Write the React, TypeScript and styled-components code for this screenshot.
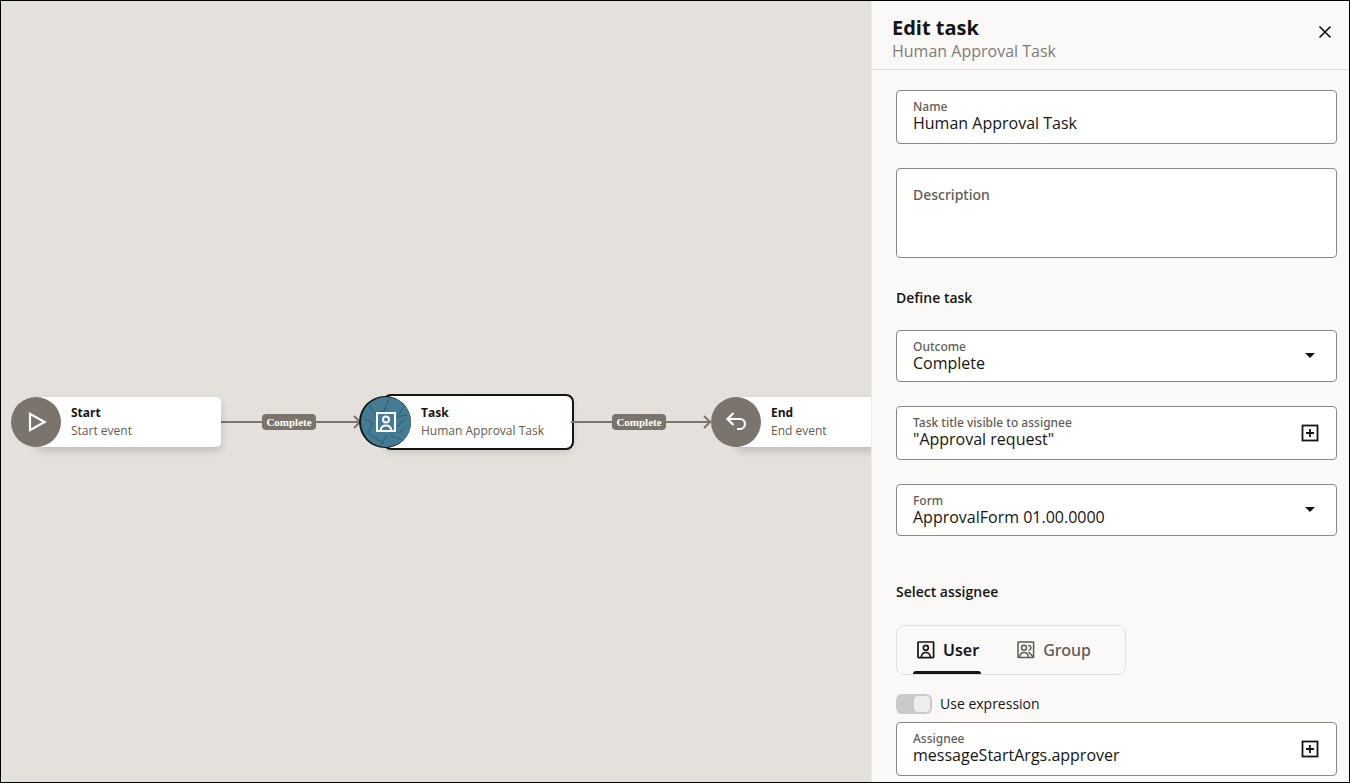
import React, { useId, useState } from "react";
import styled, { createGlobalStyle } from "styled-components";

const ink = "#161513";
const muted = "#5f5b57";
const stone = "#7a746d";
const mediumFont = `"Noto Sans", "Open Sans", sans-serif`;

const GlobalStyle = createGlobalStyle`
  *, *::before, *::after { box-sizing: border-box; }
  body { margin: 0; }
  body, button, input, select, textarea {
    font-family: "Open Sans", "Noto Sans", sans-serif;
    color: ${ink};
  }
`;

const Shell = styled.div`
  display: grid;
  grid-template-columns: minmax(0, 1fr) 478px;
  height: 100vh;
  border: 1px solid #000;
  overflow: hidden;
`;

const Canvas = styled.main`
  position: relative;
  overflow: hidden;
  background: #e4e1dc;
`;

/* Flow nodes and connectors have free positions on the canvas. */
const NodeBox = styled.div<{ $x: number; $y: number }>`
  position: absolute;
  left: ${(p) => p.$x}px;
  top: ${(p) => p.$y}px;
  display: flex;
  align-items: center;
  width: 210px;
  height: 50px;
`;

const NodeCard = styled.div<{ $selected?: boolean }>`
  flex: 1;
  align-self: stretch;
  display: flex;
  flex-direction: column;
  justify-content: center;
  margin-left: -25px;
  padding-left: 35px;
  background: #fff;
  border-radius: 5px;
  outline: ${(p) => (p.$selected ? `2px solid ${ink}` : "none")};
  outline-offset: 1px;
  box-shadow: ${(p) => (p.$selected ? "0 0 0 1px #fff, " : "")}0 4px 8px rgba(0, 0, 0, 0.16);
`;

const NodeIcon = styled.div<{ $selected?: boolean }>`
  position: relative;
  z-index: 1;
  width: 50px;
  height: 50px;
  border-radius: 50%;
  overflow: hidden;
  background: ${(p) => (p.$selected ? "#437c94" : stone)};
  box-shadow: ${(p) => (p.$selected ? `-1px 0 0 1px ${ink}` : "none")};

  svg { display: block; }
`;

const NodeTitle = styled.strong`
  font-size: 12px;
  line-height: 18px;
  font-weight: 700;
`;

const NodeSubtitle = styled.span`
  font-size: 12px;
  line-height: 18px;
  color: ${muted};
  white-space: nowrap;
`;

const EdgeBox = styled.div<{ $x: number; $y: number }>`
  position: absolute;
  left: ${(p) => p.$x}px;
  top: ${(p) => p.$y}px;
  display: grid;
  width: 142px;
  height: 16px;
  align-items: center;

  > * { grid-area: 1 / 1; }
`;

const EdgeLabel = styled.span`
  justify-self: center;
  margin-right: 6px;
  padding: 0 4px;
  border-radius: 4px;
  background: ${stone};
  color: #fff;
  font: 700 11px/16px "Liberation Serif", serif;
`;

const Panel = styled.aside`
  display: flex;
  flex-direction: column;
  min-height: 0;
  border-left: 1px solid #efedea;
  background: #fbf9f8;
`;

const PanelHeader = styled.header`
  display: flex;
  justify-content: space-between;
  align-items: flex-start;
  padding: 15px 12px 7px 20px;
  border-bottom: 1px solid #dddbd9;
`;

const PanelTitle = styled.h1`
  margin: 0;
  font-size: 20px;
  line-height: 24px;
  font-weight: 700;
`;

const PanelSubtitle = styled.p`
  margin: 0;
  font-size: 16px;
  line-height: 22px;
  color: #7f7c78;
`;

const IconButton = styled.button`
  display: grid;
  place-items: center;
  flex: none;
  width: 24px;
  height: 24px;
  padding: 0;
  border: 0;
  background: none;
  cursor: pointer;
`;

const CloseButton = styled(IconButton)`
  margin-top: 4px;
`;

const Form = styled.form`
  display: flex;
  flex-direction: column;
  min-height: 0;
  overflow: hidden;
  padding: 20px 12px 0 24px;
`;

const Fields = styled.div`
  display: flex;
  flex-direction: column;
  gap: 24px;
`;

const SectionTitle = styled.h2<{ $above: number; $below: number }>`
  margin: ${(p) => p.$above}px 0 ${(p) => p.$below}px;
  font-size: 14px;
  line-height: 24px;
  font-weight: 600;
`;

const FieldBox = styled.div<{ $compact?: boolean }>`
  display: flex;
  align-items: center;
  flex: none;
  height: ${(p) => (p.$compact ? 52 : 54)}px;
  padding: 0 14px 0 16px;
  border: 1px solid #8b8885;
  border-radius: 4px;
  background: #fff;
`;

const FieldText = styled.div`
  flex: 1;
  align-self: flex-start;
  display: flex;
  flex-direction: column;
  min-width: 0;
  padding-top: 9px;
`;

const FieldLabel = styled.label`
  font-family: ${mediumFont};
  font-size: 12px;
  line-height: 14px;
  font-weight: 500;
  color: ${muted};
`;

const TextInput = styled.input`
  width: 100%;
  height: 22px;
  margin: -2px 0 0;
  padding: 0;
  border: 0;
  outline: 0;
  background: none;
  font-size: 16px;
  line-height: 22px;
`;

const SelectInput = styled.select`
  width: 100%;
  height: 22px;
  margin: -2px 0 0;
  padding: 0;
  border: 0;
  outline: 0;
  appearance: none;
  background: none;
  font-size: 16px;
  line-height: 22px;
`;

const CaretSlot = styled.span`
  display: grid;
  place-items: center;
  width: 24px;
  height: 24px;
`;

const AreaBox = styled.div`
  display: flex;
  flex-direction: column;
  height: 90px;
  padding: 16px;
  border: 1px solid #8b8885;
  border-radius: 4px;
  background: #fff;
`;

const AreaLabel = styled.label`
  font-family: ${mediumFont};
  font-size: 14px;
  line-height: 20px;
  font-weight: 500;
  color: ${muted};
`;

const Area = styled.textarea`
  flex: 1;
  min-height: 0;
  padding: 0;
  border: 0;
  outline: 0;
  resize: none;
  background: none;
  font-size: 16px;
  line-height: 20px;
`;

const Tabs = styled.div`
  display: flex;
  align-self: flex-start;
  gap: 32px;
  height: 50px;
  padding: 0 32px 0 16px;
  border: 1px solid #e1dfdd;
  border-radius: 8px;
`;

const Tab = styled.button<{ $active: boolean }>`
  position: relative;
  display: flex;
  align-items: center;
  gap: 8px;
  padding: 0 2px 0 4px;
  border: 0;
  background: none;
  font-family: ${mediumFont};
  font-size: 16px;
  line-height: 20px;
  font-weight: ${(p) => (p.$active ? 600 : 500)};
  color: ${(p) => (p.$active ? ink : muted)};
  cursor: pointer;

  &::after {
    content: "";
    position: absolute;
    inset: auto 0 0;
    height: ${(p) => (p.$active ? 3 : 0)}px;
    border-radius: 3px 3px 0 0;
    background: ${ink};
  }
`;

const SwitchRow = styled.div`
  display: flex;
  align-items: center;
  gap: 8px;
  padding: 17px 0 6px;
`;

const Switch = styled.input`
  display: flex;
  align-items: center;
  width: 36px;
  height: 20px;
  margin: 0;
  padding: 0 2px;
  appearance: none;
  border-radius: 6px;
  background: #cbc9c9;

  &::before {
    content: "";
    width: 16px;
    height: 16px;
    border-radius: 4px;
    background: #efeeec;
  }

  &:checked::before { margin-left: auto; }
`;

const SwitchLabel = styled.label`
  font-size: 14px;
  line-height: 24px;
`;

const PlayGlyph = () => (
  <svg width="50" height="50" viewBox="0 0 50 50" aria-hidden="true">
    <path d="M19 16.8v16.4L33.6 25z" fill="none" stroke="#fff" strokeWidth="2.2" />
  </svg>
);

const ReturnGlyph = () => (
  <svg width="50" height="50" viewBox="0 0 50 50" aria-hidden="true">
    <path
      d="M22.5 16 16.500 22l6 6M16.500 22H29a5 5 0 0 1 0 10H26"
      fill="none"
      stroke="#fff"
      strokeWidth="2.2"
    />
  </svg>
);

const PersonGlyph = () => (
  <svg width="50" height="50" viewBox="0 0 50 50" aria-hidden="true">
    <path
      d="M28 2l-5 12M8 8l6 9M14 17l12-5M3 22l9 4M12 26l-5 10M7 36l6 4M13 40l10 7M26 38l-6 9M30 38l11 5M36 30l8-8M44 8l-8 12M36 20l10-2M38 36l6-6"
      fill="none"
      stroke="#346579"
      strokeWidth="1.300"
    />
    <rect x="16" y="16" width="18" height="18" fill="none" stroke="#fff" strokeWidth="2" />
    <circle cx="25" cy="22.500" r="3" fill="none" stroke="#fff" strokeWidth="2" />
    <path d="M19.500 33.500c.5-3 2.500-5 5.500-5s5 2 5.500 5" fill="none" stroke="#fff" strokeWidth="2" />
  </svg>
);

const UserIcon = () => (
  <svg width="18" height="18" viewBox="0 0 18 18" fill="none" stroke="currentColor" strokeWidth="1.700" aria-hidden="true">
    <rect x="1" y="1" width="15.600" height="15.600" rx=".6" />
    <circle cx="8.800" cy="6.800" r="2.500" />
    <path d="M4.200 16.300c.3-3 2-4.800 4.600-4.800s4.300 1.800 4.600 4.800" />
  </svg>
);

const GroupIcon = () => (
  <svg width="18" height="18" viewBox="0 0 18 18" fill="none" stroke="currentColor" strokeWidth="1.500" aria-hidden="true">
    <rect x="1" y="1" width="15.600" height="15.600" rx=".6" />
    <circle cx="7" cy="6.800" r="2.500" />
    <path d="M2.600 16.300c.3-3 1.800-4.800 4.400-4.800s4.100 1.800 4.400 4.800M11.200 4.700a2.200 2.200 0 1 1 .3 4.300M11.500 11l4.600 4.800" />
  </svg>
);

const PlusBoxIcon = () => (
  <svg width="18" height="18" viewBox="0 0 18 18" fill="none" stroke={ink} strokeWidth="1.800" aria-hidden="true">
    <rect x="1.500" y="1.500" width="15" height="15" />
    <path d="M9 5v8M5 9h8" />
  </svg>
);

const Caret = () => (
  <CaretSlot>
    <svg width="10" height="6" viewBox="0 0 10 6" aria-hidden="true">
      <path d="M0 0h10L5 5z" fill={ink} />
    </svg>
  </CaretSlot>
);

type NodeProps = {
  x: number;
  y: number;
  title: string;
  subtitle: string;
  selected?: boolean;
  children: React.ReactNode;
};

const FlowNode = ({ x, y, title, subtitle, selected, children }: NodeProps) => (
  <NodeBox $x={x} $y={y}>
    <NodeIcon $selected={selected}>{children}</NodeIcon>
    <NodeCard $selected={selected}>
      <NodeTitle>{title}</NodeTitle>
      <NodeSubtitle>{subtitle}</NodeSubtitle>
    </NodeCard>
  </NodeBox>
);

const Edge = ({ x, y, label }: { x: number; y: number; label: string }) => (
  <EdgeBox $x={x} $y={y}>
    <svg width="142" height="16" viewBox="0 0 142 16" aria-hidden="true">
      <path d="M0 8h140M133 2l6 6-6 6" fill="none" stroke={stone} strokeWidth="2" />
    </svg>
    <EdgeLabel>{label}</EdgeLabel>
  </EdgeBox>
);

type FieldProps = { label: string; initial: string; expandable?: boolean };

const TextField = ({ label, initial, expandable }: FieldProps) => {
  const id = useId();
  return (
    <FieldBox>
      <FieldText>
        <FieldLabel htmlFor={id}>{label}</FieldLabel>
        <TextInput id={id} defaultValue={initial} />
      </FieldText>
      {expandable && (
        <IconButton type="button" aria-label={`Edit ${label}`}>
          <PlusBoxIcon />
        </IconButton>
      )}
    </FieldBox>
  );
};

const SelectField = ({ label, initial }: FieldProps) => {
  const id = useId();
  return (
    <FieldBox $compact>
      <FieldText>
        <FieldLabel htmlFor={id}>{label}</FieldLabel>
        <SelectInput id={id} defaultValue={initial}>
          <option>{initial}</option>
        </SelectInput>
      </FieldText>
      <Caret />
    </FieldBox>
  );
};

export default function App() {
  const [tab, setTab] = useState<"user" | "group">("user");

  return (
    <>
      <GlobalStyle />
      <Shell>
        <Canvas>
          <Edge x={220} y={413} label="Complete" />
          <FlowNode x={10} y={396} title="Start" subtitle="Start event">
            <PlayGlyph />
          </FlowNode>
          <FlowNode x={360} y={396} title="Task" subtitle="Human Approval Task" selected>
            <PersonGlyph />
          </FlowNode>
          <Edge x={570} y={413} label="Complete" />
          <FlowNode x={710} y={396} title="End" subtitle="End event">
            <ReturnGlyph />
          </FlowNode>
        </Canvas>

        <Panel>
          <PanelHeader>
            <div>
              <PanelTitle>Edit task</PanelTitle>
              <PanelSubtitle>Human Approval Task</PanelSubtitle>
            </div>
            <CloseButton type="button" aria-label="Close">
              <svg width="14" height="14" viewBox="0 0 14 14" aria-hidden="true">
                <path d="M1.500 1.500l11 11M12.500 1.500l-11 11" stroke={ink} strokeWidth="1.700" />
              </svg>
            </CloseButton>
          </PanelHeader>

          <Form>
            <Fields>
              <TextField label="Name" initial="Human Approval Task" />
              <AreaBox>
                <AreaLabel htmlFor="description">Description</AreaLabel>
                <Area id="description" />
              </AreaBox>
            </Fields>

            <SectionTitle $above={28} $below={20}>Define task</SectionTitle>
            <Fields>
              <SelectField label="Outcome" initial="Complete" />
              <TextField label="Task title visible to assignee" initial={'"Approval request"'} expandable />
              <SelectField label="Form" initial="ApprovalForm 01.00.0000" />
            </Fields>

            <SectionTitle $above={44} $below={21}>Select assignee</SectionTitle>
            <Tabs role="tablist" aria-label="Assignee type">
              <Tab type="button" role="tab" aria-selected={tab === "user"} $active={tab === "user"} onClick={() => setTab("user")}>
                <UserIcon />
                User
              </Tab>
              <Tab type="button" role="tab" aria-selected={tab === "group"} $active={tab === "group"} onClick={() => setTab("group")}>
                <GroupIcon />
                Group
              </Tab>
            </Tabs>
            <SwitchRow>
              <Switch id="use-expression" type="checkbox" role="switch" defaultChecked disabled />
              <SwitchLabel htmlFor="use-expression">Use expression</SwitchLabel>
            </SwitchRow>
            <TextField label="Assignee" initial="messageStartArgs.approver" expandable />
          </Form>
        </Panel>
      </Shell>
    </>
  );
}
